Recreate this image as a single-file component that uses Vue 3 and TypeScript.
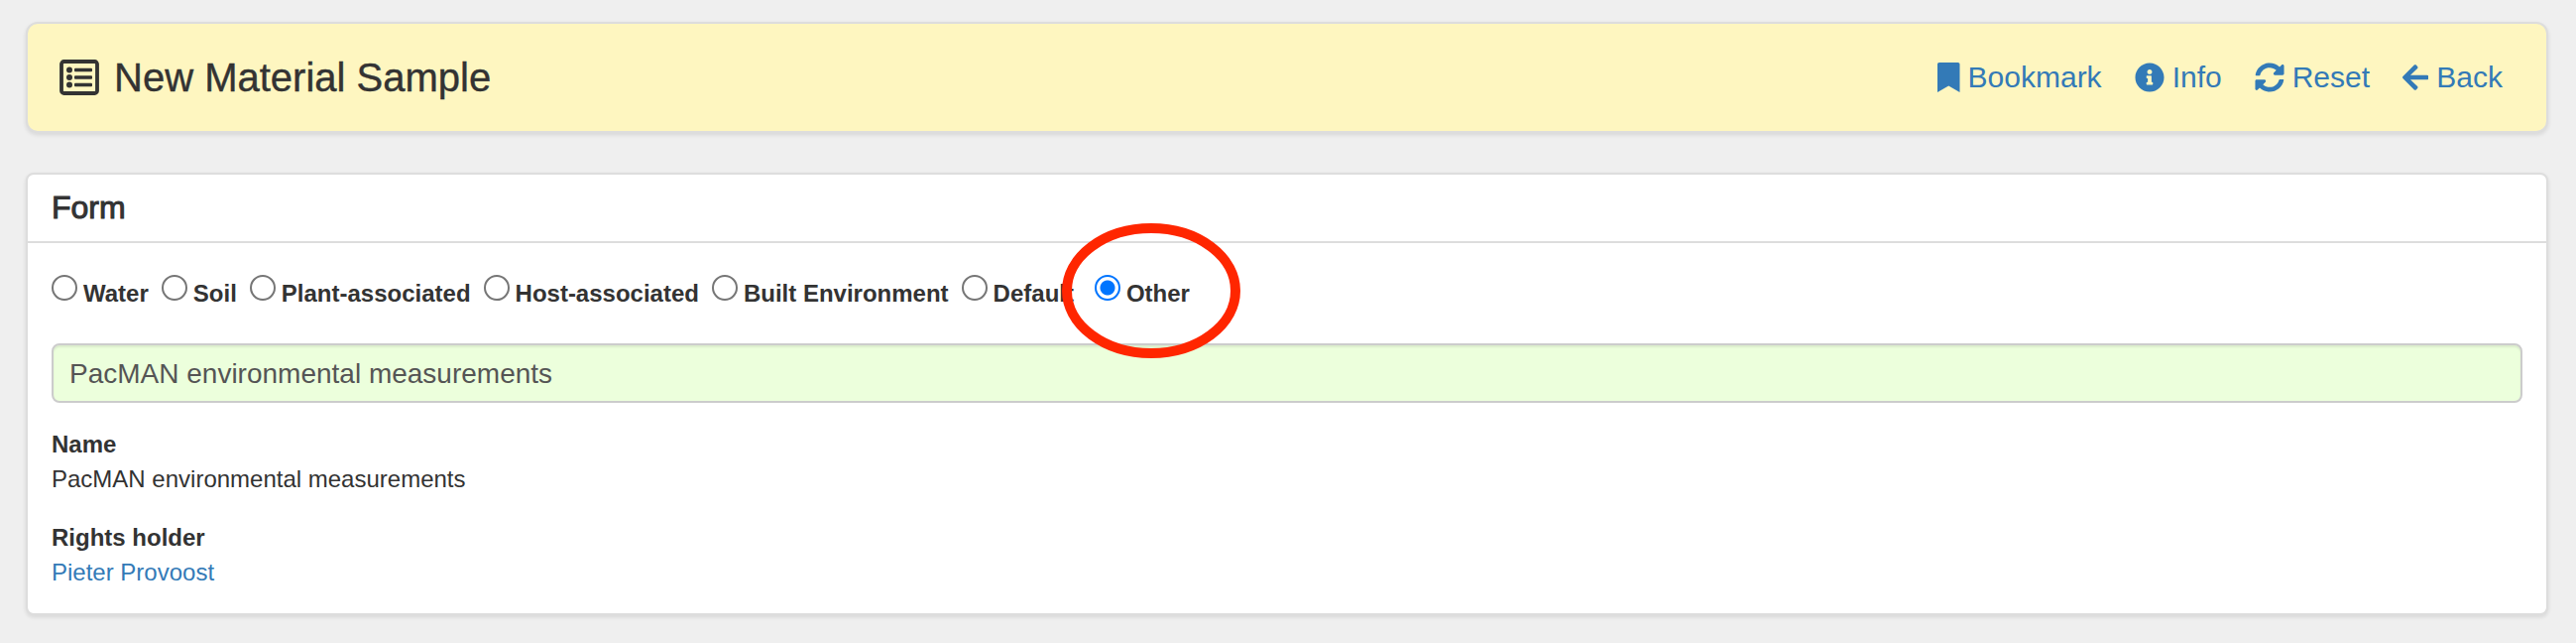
<script setup lang="ts">
import { ref } from 'vue'

const packages: string[] = [
  'Water',
  'Soil',
  'Plant-associated',
  'Host-associated',
  'Built Environment',
  'Default',
  'Other',
]
const selected = ref('Other')
const template = ref('PacMAN environmental measurements')
</script>

<template>
  <main class="page">
    <header class="card title-bar">
      <h1>
        <svg class="title-icon" viewBox="0 0 40 36" aria-hidden="true">
          <rect x="2" y="2" width="36" height="32" rx="2.5" fill="none" stroke="currentColor" stroke-width="3.8" />
          <g fill="currentColor">
            <circle cx="10" cy="10.500" r="3" />
            <circle cx="10" cy="18" r="3" />
            <circle cx="10" cy="25.500" r="3" />
            <rect x="15" y="8.700" width="18" height="3.600" rx="1" />
            <rect x="15" y="16.200" width="18" height="3.600" rx="1" />
            <rect x="15" y="23.700" width="18" height="3.600" rx="1" />
          </g>
        </svg>
        New Material Sample
      </h1>
      <nav class="actions">
        <a href="#bookmark">
          <svg class="icon" viewBox="0 0 384 512" aria-hidden="true">
            <path d="M0 512V32C0 12 12 0 32 0h320c20 0 32 12 32 32v480L192 400 0 512z" />
          </svg>
          Bookmark
        </a>
        <a href="#info">
          <svg class="icon" viewBox="0 0 512 512" aria-hidden="true">
            <path d="M256 8C119.043 8 8 119.083 8 256c0 136.997 111.043 248 248 248s248-111.003 248-248C504 119.083 392.957 8 256 8zm0 110c23.196 0 42 18.804 42 42s-18.804 42-42 42-42-18.804-42-42 18.804-42 42-42zm56 254c0 6.627-5.373 12-12 12h-88c-6.627 0-12-5.373-12-12v-24c0-6.627 5.373-12 12-12h12v-64h-12c-6.627 0-12-5.373-12-12v-24c0-6.627 5.373-12 12-12h64c6.627 0 12 5.373 12 12v100h12c6.627 0 12 5.373 12 12v24z" />
          </svg>
          Info
        </a>
        <a href="#reset">
          <svg class="icon" viewBox="0 0 512 512" aria-hidden="true">
            <path d="M370.72 133.28C339.458 104.008 298.888 87.962 255.848 88c-77.458.068-144.328 53.178-162.791 126.85-1.344 5.363-6.122 9.15-11.651 9.15H24.103c-7.498 0-13.194-6.807-11.807-14.176C33.933 94.924 134.813 8 256 8c66.448 0 126.791 26.136 171.315 68.685L463.03 40.97C478.149 25.851 504 36.559 504 57.941V192c0 13.255-10.745 24-24 24H345.941c-21.382 0-32.09-25.851-16.971-40.971l41.75-41.749zM32 296h134.059c21.382 0 32.09 25.851 16.971 40.971l-41.75 41.75c31.262 29.273 71.835 45.319 114.876 45.28 77.418-.07 144.315-53.144 162.787-126.849 1.344-5.363 6.122-9.15 11.651-9.15h57.304c7.498 0 13.194 6.807 11.807 14.176C478.067 417.076 377.187 504 256 504c-66.448 0-126.791-26.136-171.315-68.685L48.97 471.03C33.851 486.149 8 475.441 8 454.059V320c0-13.255 10.745-24 24-24z" />
          </svg>
          Reset
        </a>
        <a href="#back">
          <svg class="icon" viewBox="0 0 448 512" aria-hidden="true">
            <path d="M257.5 445.1l-22.2 22.2c-9.4 9.4-24.6 9.4-33.9 0L7 273c-9.4-9.4-9.4-24.6 0-33.9L201.4 44.7c9.4-9.4 24.6-9.4 33.9 0l22.2 22.2c9.5 9.5 9.3 25-.4 34.3L136.6 216H424c13.3 0 24 10.7 24 24v32c0 13.3-10.7 24-24 24H136.6l120.5 114.8c9.8 9.3 10 24.8.4 34.3z" />
          </svg>
          Back
        </a>
      </nav>
    </header>

    <section class="card">
      <h2>Form</h2>
      <form class="form-body" @submit.prevent>
        <div class="options" role="radiogroup" aria-label="Form">
          <label v-for="name in packages" :key="name" :class="{ marked: name === 'Other' }">
            <input v-model="selected" type="radio" name="package" :value="name" />
            <span>{{ name }}</span>
            <svg v-if="name === 'Other'" class="ring" viewBox="0 0 180 136" aria-hidden="true">
              <ellipse cx="90" cy="68" rx="85" ry="63" fill="none" stroke="#ff2600" stroke-width="10" />
            </svg>
          </label>
        </div>
        <select v-model="template" class="template" aria-label="Template">
          <option>PacMAN environmental measurements</option>
        </select>
        <dl>
          <dt>Name</dt>
          <dd>PacMAN environmental measurements</dd>
          <dt>Rights holder</dt>
          <dd><a href="#pieter-provoost">Pieter Provoost</a></dd>
        </dl>
      </form>
    </section>
  </main>
</template>

<style>
body {
  margin: 0;
  background: #efefef;
}
</style>

<style scoped>
.page {
  display: flex;
  flex-direction: column;
  gap: 40px;
  padding: 22px 28px 28px 26px;
  font-family: 'Liberation Sans', Arial, sans-serif;
  font-size: 24px;
  line-height: 35px;
  color: #333;
}
.card {
  background: #fff;
  border: 2px solid #ddd;
  border-radius: 8px;
  box-shadow: 0 2px 4px rgba(0, 0, 0, 0.1);
}
.title-bar {
  display: flex;
  justify-content: space-between;
  align-items: center;
  padding: 32px 44px 32px 32px;
  background: #fef6c0;
  border-radius: 12px;
}
h1 {
  display: flex;
  align-items: center;
  gap: 15px;
  margin: 0;
  font-size: 40px;
  font-weight: 400;
  line-height: 44px;
  -webkit-text-stroke: 0.4px currentColor;
}
.title-icon {
  width: 40px;
  height: 36px;
}
.actions {
  display: flex;
  gap: 33px;
  font-size: 30px;
}
a {
  color: #337ab7;
  text-decoration: none;
}
.actions a {
  display: flex;
  align-items: center;
  gap: 8px;
  line-height: 36px;
}
.icon {
  height: 30px;
  fill: currentColor;
}
h2 {
  margin: 0;
  padding: 16px 24px;
  border-bottom: 2px solid #ddd;
  font-size: 32px;
  font-weight: 400;
  line-height: 35px;
  -webkit-text-stroke: 1px currentColor;
}
.form-body {
  padding: 32px 24px 24px;
}
.options {
  display: flex;
  gap: 13px;
  margin-bottom: 32px;
}
label {
  position: relative;
  display: flex;
  gap: 6px;
  font-weight: 700;
  line-height: 37px;
}
.marked {
  margin-left: 8px;
}
label input {
  appearance: none;
  width: 26px;
  height: 26px;
  margin: 0;
  border: 2px solid #767676;
  border-radius: 50%;
  background: #fff;
}
label input:checked {
  border-color: #0075ff;
  background: radial-gradient(circle, #0075ff 0 7px, #fff 8px);
}
.ring {
  position: absolute;
  left: -33px;
  top: -52px;
  width: 180px;
  height: 136px;
}
.template {
  display: block;
  appearance: none;
  width: 100%;
  height: 60px;
  margin: 0;
  padding: 0 16px;
  border: 2px solid #ccc;
  border-radius: 8px;
  background: #ecffdc;
  box-shadow: inset 0 2px 2px rgba(0, 0, 0, 0.08);
  color: #555;
  font: inherit;
  font-size: 28px;
}
dl {
  margin: 24px 0 0;
}
dt {
  font-weight: 700;
}
dd {
  margin: 0 0 24px;
}
dd:last-child {
  margin-bottom: 0;
}
</style>
